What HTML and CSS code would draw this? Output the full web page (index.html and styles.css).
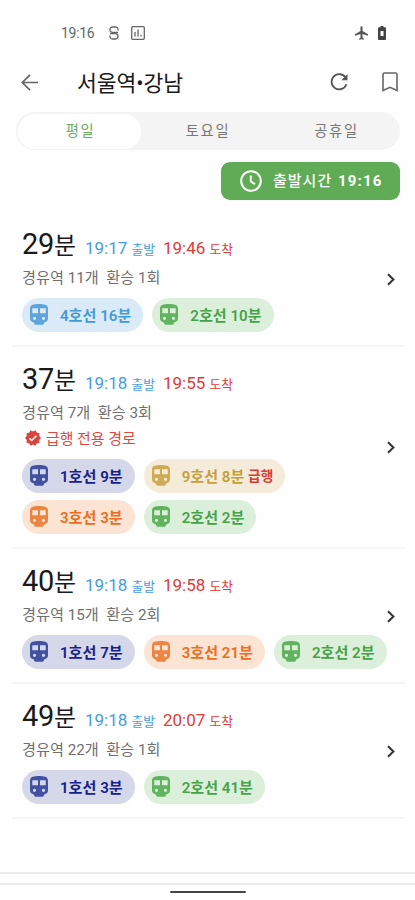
FILE: index.html
```html
<!DOCTYPE html>
<html lang="ko">
<head>
<meta charset="utf-8">
<title>서울역•강남</title>
<link rel="stylesheet" href="styles.css">
</head>
<body>
<svg class="defs" width="0" height="0">
  <symbol id="train" viewBox="0 0 18 21"><path fill-rule="evenodd" d="M9 0C4 0 0 .6 0 4.500V14.500C0 16.500 1.500 18 3.500 18.200L5 20.800H13L14.500 18.200C16.500 18 18 16.500 18 14.500V4.500C18 .6 14 0 9 0zM2.300 4.300H8V9.300H2.300zM10 4.300H15.700V9.300H10zM4.500 12.700a1.600 1.600 0 1 1 0 3.200 1.600 1.600 0 0 1 0-3.200zM13.500 12.700a1.600 1.600 0 1 1 0 3.200 1.600 1.600 0 0 1 0-3.200z"/></symbol>
  <symbol id="chev" viewBox="0 0 8 13"><path d="M1 1.200 6.400 6.500 1 11.800" fill="none" stroke="currentColor" stroke-width="2"/></symbol>
</svg>
<header class="status">
  <span class="clock">19:16</span>
  <svg class="s-icon" width="10" height="14" viewBox="0 0 10 14" fill="none" stroke="#666" stroke-width="1.300"><path d="M9 4.500V3.500Q9 1 6.500 1h-3Q1 1 1 3.700T3.500 6.300H9M1 7.700h5.500Q9 7.700 9 10.300T6.500 13h-3Q1 13 1 10.500v-1"/></svg>
  <svg class="c-icon" width="14" height="14" viewBox="0 0 14 14" fill="none" stroke="#666" stroke-width="1.300"><rect x=".7" y=".7" width="12.600" height="12.600" rx="1"/><path d="M4 6v4.500M7 3.500v7M10 8.800v1.700"/></svg>
  <svg class="plane" width="13" height="14" viewBox="2 2 19 20" fill="#555"><path d="M21 16v-2l-8-5V3.500c0-.83-.67-1.500-1.500-1.500S10 2.670 10 3.500V9l-8 5v2l8-2.500V19l-2 1.500V22l3.500-1 3.500 1v-1.500L13 19v-5.500l8 2.500z"/></svg>
  <svg class="batt" width="8" height="14" viewBox="0 0 8 14"><path fill="#444" fill-rule="evenodd" d="M2.500 0h3v1.300H7q1 0 1 1V13q0 1-1 1H1q-1 0-1-1V2.300q0-1 1-1h1.500zM2.500 5v5h3V5z"/></svg>
</header>
<nav class="bar">
  <svg class="back" width="17" height="17" viewBox="0 0 17 17" fill="none" stroke="#666" stroke-width="1.700"><path d="M17 8.500H1.500M9 .8 1.300 8.500 9 16.200"/></svg>
  <h1>서울역•강남</h1>
  <svg class="reload" width="18" height="18" viewBox="0 0 18 18"><path d="M15.800 5A7.600 7.600 0 1 0 16.400 11.200" fill="none" stroke="#555" stroke-width="1.800"/><path d="M17.500 1V7.200H11.300z" fill="#555"/></svg>
  <svg class="mark" width="16" height="20" viewBox="0 0 16 20" fill="none" stroke="#666" stroke-width="1.600"><path d="M1 2.500Q1 1 2.500 1h11Q15 1 15 2.500V18.500l-7-3.200-7 3.200z"/></svg>
</nav>
<div class="tabs"><span class="on">평일</span><span>토요일</span><span>공휴일</span></div>
<div class="action"><button><svg width="22" height="22" viewBox="0 0 22 22" fill="none" stroke="#fff" stroke-width="2"><circle cx="11" cy="11" r="9.800"/><path d="M10.800 5.500v6l4.200 2.700"/></svg><span>출발시간 <b>19:16</b></span></button></div>
<main>
  <section class="route">
    <div class="body">
      <div class="head"><span class="dur">29<i>분</i></span><span class="dep">19:17 <i>출발</i></span><span class="arr">19:46 <i>도착</i></span></div>
      <div class="meta">경유역 11개&nbsp; 환승 1회</div>
      <div class="chips"><span class="chip l4"><svg><use href="#train"/></svg>4호선 16분</span><span class="chip l2"><svg><use href="#train"/></svg>2호선 10분</span></div>
    </div>
    <svg class="chev"><use href="#chev"/></svg>
  </section>
  <section class="route tall">
    <div class="body">
      <div class="head"><span class="dur">37<i>분</i></span><span class="dep">19:18 <i>출발</i></span><span class="arr">19:55 <i>도착</i></span></div>
      <div class="meta">경유역 7개&nbsp; 환승 3회</div>
      <div class="express"><svg width="16" height="16" viewBox="1 1 22 22"><path fill="#d8453e" d="m23 12-2.440-2.790.34-3.690-3.610-.82-1.890-3.200L12 2.960 8.600 1.500 6.710 4.690 3.100 5.500l.34 3.700L1 12l2.440 2.790-.34 3.700 3.610.82L8.600 22.500l3.400-1.470 3.400 1.460 1.890-3.190 3.610-.82-.34-3.690L23 12z"/><path d="m7 12.300 3.200 3.200 6.600-6.600" fill="none" stroke="#fff" stroke-width="2"/></svg>급행 전용 경로</div>
      <div class="chips"><span class="chip l1"><svg><use href="#train"/></svg>1호선 9분</span><span class="chip l9"><svg><use href="#train"/></svg>9호선 8분&nbsp;<em>급행</em></span><span class="chip l3"><svg><use href="#train"/></svg>3호선 3분</span><span class="chip l2"><svg><use href="#train"/></svg>2호선 2분</span></div>
    </div>
    <svg class="chev"><use href="#chev"/></svg>
  </section>
  <section class="route">
    <div class="body">
      <div class="head"><span class="dur">40<i>분</i></span><span class="dep">19:18 <i>출발</i></span><span class="arr">19:58 <i>도착</i></span></div>
      <div class="meta">경유역 15개&nbsp; 환승 2회</div>
      <div class="chips"><span class="chip l1"><svg><use href="#train"/></svg>1호선 7분</span><span class="chip l3"><svg><use href="#train"/></svg>3호선 21분</span><span class="chip l2"><svg><use href="#train"/></svg>2호선 2분</span></div>
    </div>
    <svg class="chev"><use href="#chev"/></svg>
  </section>
  <section class="route">
    <div class="body">
      <div class="head"><span class="dur">49<i>분</i></span><span class="dep">19:18 <i>출발</i></span><span class="arr">20:07 <i>도착</i></span></div>
      <div class="meta">경유역 22개&nbsp; 환승 1회</div>
      <div class="chips"><span class="chip l1"><svg><use href="#train"/></svg>1호선 3분</span><span class="chip l2"><svg><use href="#train"/></svg>2호선 41분</span></div>
    </div>
    <svg class="chev"><use href="#chev"/></svg>
  </section>
</main>
<footer><div class="band"></div><div class="pill"></div></footer>
</body>
</html>
```
FILE: styles.css
```css
* { box-sizing: border-box; }
body {
  margin: 0;
  width: 415px;
  height: 900px;
  overflow: hidden;
  display: flex;
  flex-direction: column;
  background: #fefefe;
  color: #1a1a1a;
  font-family: Roboto, "Noto Sans CJK KR", sans-serif;
}
i, em { font-style: normal; }
svg { flex: none; display: block; }
.defs { position: absolute; }
.status {
  height: 64px;
  padding: 1px 29px 0 61px;
  display: flex;
  align-items: center;
  color: #666;
}
.clock { width: 48px; font-size: 14px; letter-spacing: -0.3px; line-height: 16px; }
.c-icon { margin-left: 12px; }
.plane { margin-left: auto; }
.batt { margin-left: 10px; }
.bar {
  height: 36px;
  padding: 0 17px 0 21px;
  display: flex;
  align-items: center;
}
.bar h1 {
  margin: 3px 0 0 39px;
  font-size: 21.600px;
  font-weight: 400;
  letter-spacing: -0.1px;
  line-height: 33px;
}
.reload { margin-left: auto; }
.mark { margin-left: 34px; }
.tabs {
  margin: 12px 15px 0 16px;
  height: 38px;
  padding: 2px;
  display: grid;
  grid-template-columns: 123px 132px 1fr;
  border-radius: 19px;
  background: #f4f4f4;
  color: #777;
  font-size: 14.300px;
  letter-spacing: 1.7px;
  line-height: 35px;
  text-align: center;
}
.tabs span { padding-left: 2px; }
.tabs .on {
  border-radius: 17px;
  background: #fff;
  color: #6aaa5f;
}
.action {
  height: 50px;
  padding: 12px 15px 0 0;
  display: flex;
  justify-content: flex-end;
}
button {
  width: 179px;
  height: 38px;
  padding: 0 0 0 19px;
  border: 0;
  border-radius: 9px;
  display: flex;
  align-items: center;
  gap: 11px;
  background: #60ab55;
  color: #fff;
  font: 500 15px/36px Roboto, "Noto Sans CJK KR", sans-serif;
  letter-spacing: 1px;
  white-space: nowrap;
}
button b { margin-left: 1px; font-weight: 700; letter-spacing: 1.200px; }
main { padding: 12px 10px 0 12px; }
.route {
  height: 135px;
  padding: 15px 10px 0;
  display: flex;
  border-bottom: 2px solid #f6f6f6;
}
.route.tall { height: 202px; }
.body { flex: 1; min-width: 0; }
.head {
  height: 34px;
  display: flex;
  align-items: baseline;
  line-height: 34px;
  white-space: nowrap;
}
.dur { width: 63px; font-size: 29px; letter-spacing: -0.3px; }
.dur i { font-size: 24px; }
.dep, .arr { font-size: 17px; }
.dep { width: 78px; color: #459de2; }
.arr { color: #de3c37; }
.dep i, .arr i { font-size: 12.700px; }
.meta {
  height: 29px;
  padding-top: 4px;
  font-size: 15.200px;
  line-height: 26px;
  color: #707070;
  white-space: pre;
}
.express {
  height: 26px;
  padding-bottom: 1px;
  margin-left: 3px;
  display: flex;
  align-items: center;
  gap: 5px;
  font-size: 14.900px;
  color: #df4742;
}
.chips {
  width: 375px;
  margin-top: 8px;
  display: flex;
  flex-wrap: wrap;
  gap: 6.500px 9px;
}
.chip {
  height: 34px;
  padding: 0 12px 2px 8px;
  border-radius: 17px;
  display: flex;
  align-items: center;
  font-size: 15.100px;
  font-weight: 600;
  white-space: nowrap;
}
.chip svg { width: 18px; height: 21px; margin: 1px 12px 0 0; fill: var(--icon); }
.l1 { --icon: #4351a2; background: #d4d8e9; color: #17208d; }
.l2 { --icon: #61b35f; background: #dcefda; color: #46a349; }
.l3 { --icon: #ec8542; background: #fbe4d4; color: #eb6d20; }
.l4 { --icon: #5da5dc; background: #dbeaf7; color: #459bd6; }
.l9 { --icon: #ceac56; background: #f4ecd9; color: #c69f3d; }
.chip em { color: #dd3a35; font-size: 13.700px; }
.chev {
  width: 8px;
  height: 13px;
  margin: 46px 0 0 -8px;
  color: #333;
}
.tall .chev { margin-top: 79px; }
footer {
  margin-top: auto;
  height: 28px;
  display: flex;
  flex-direction: column;
  align-items: center;
}
.band {
  width: 100%;
  height: 13px;
  border-top: 2px solid #ebebeb;
  border-bottom: 2px solid #ebebeb;
}
.pill {
  width: 76px;
  height: 2px;
  margin-top: 6px;
  border-radius: 1px;
  background: #444;
}
```
